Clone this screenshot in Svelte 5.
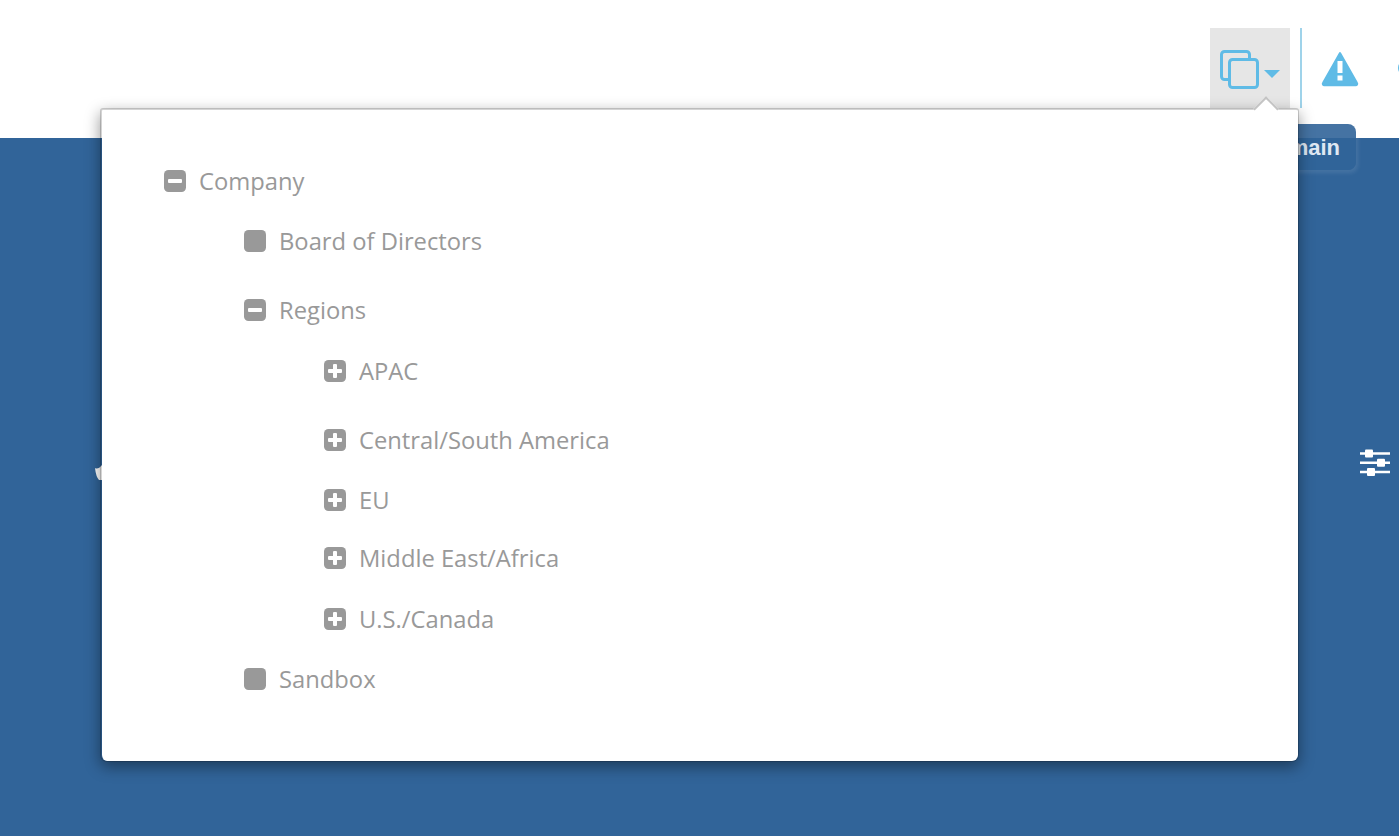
<script>
  const tree = [
    { label: 'Company', icon: 'minus', level: 0 },
    { label: 'Board of Directors', icon: 'none', level: 1 },
    { label: 'Regions', icon: 'minus', level: 1, gap: 'wide' },
    { label: 'APAC', icon: 'plus', level: 2, gap: 'nudge' },
    { label: 'Central/South America', icon: 'plus', level: 2, gap: 'wide' },
    { label: 'EU', icon: 'plus', level: 2 },
    { label: 'Middle East/Africa', icon: 'plus', level: 2, gap: 'tight' },
    { label: 'U.S./Canada', icon: 'plus', level: 2, gap: 'nudge' },
    { label: 'Sandbox', icon: 'none', level: 1 }
  ];
</script>

<div class="page">
  <header class="topbar">
    <button class="switcher" aria-label="Switch view">
      <svg width="62" height="42" viewBox="0 0 62 42" fill="none">
        <path d="M8 29.500H4.500a3 3 0 0 1-3-3V4.500a3 3 0 0 1 3-3h22a3 3 0 0 1 3 3V8" stroke="#5fbbe6" stroke-width="3" />
        <rect x="9.500" y="9.500" width="28" height="28" rx="3" stroke="#5fbbe6" stroke-width="3" />
        <path d="M44 20h16l-8 8z" fill="#5fbbe6" />
      </svg>
    </button>
    <span class="divider"></span>
    <svg class="warn" width="38" height="36" viewBox="0 0 38 36">
      <path d="M19 2 36 32a1.500 1.500 0 0 1-1.300 2.300H3.300A1.500 1.500 0 0 1 2 32z" fill="#5fbbe6" stroke="#5fbbe6" stroke-width="2" stroke-linejoin="round" />
      <rect x="16.500" y="10" width="5" height="12" fill="#fff" />
      <rect x="16.500" y="24.500" width="5" height="5" fill="#fff" />
    </svg>
    <span class="dot"></span>
  </header>

  <main class="content">
    <div class="domain">Domain</div>
    <svg class="bird" width="8" height="16" viewBox="0 0 8 16">
      <path d="M1 3Q4 5 8 0V15H5Q2 12 1 3z" fill="#fff" />
    </svg>
    <svg class="sliders" width="30" height="28" viewBox="0 0 30 28">
      <g stroke="#fff" stroke-width="2.500">
        <path d="M0 4.500h30M0 13.800h30M0 23h30" />
      </g>
      <g fill="#fff">
        <rect x="5" y="0.500" width="8" height="8" rx="1" />
        <rect x="17" y="9.800" width="8" height="8" rx="1" />
        <rect x="7" y="19" width="8" height="8" rx="1" />
      </g>
    </svg>
  </main>

  <div class="popover">
    <span class="arrow"></span>
    <ul class="tree">
      {#each tree as node}
        <li class="node level{node.level} {node.gap ?? ''}">
          <span class="box">
            {#if node.icon !== 'none'}<span class="bar"></span>{/if}
            {#if node.icon === 'plus'}<span class="bar vertical"></span>{/if}
          </span>
          <span class="label">{node.label}</span>
        </li>
      {/each}
    </ul>
  </div>
</div>

<style>
  :global(body) {
    margin: 0;
    background: #316499;
    font-family: "Open Sans", "Noto Sans", sans-serif;
  }
  .page {
    position: relative;
    height: 836px;
    overflow: hidden;
    display: flex;
    flex-direction: column;
  }
  .topbar {
    height: 138px;
    flex: none;
    box-sizing: border-box;
    background: #fff;
    padding: 28px 0 0 1210px;
    display: flex;
    align-items: flex-start;
    overflow: hidden;
  }
  .switcher {
    width: 80px;
    height: 80px;
    flex: none;
    border: 0;
    padding: 22px 0 0 10px;
    background: #e6e6e6;
    display: flex;
    align-items: flex-start;
  }
  .switcher svg {
    flex: none;
  }
  .divider {
    width: 2px;
    height: 80px;
    flex: none;
    margin-left: 10px;
    background: #9fd3ea;
  }
  .warn {
    flex: none;
    margin: 23px 0 0 19px;
  }
  .dot {
    width: 16px;
    height: 16px;
    flex: none;
    margin: 32px 0 0 39px;
    border-radius: 50%;
    background: #5fbbe6;
  }
  .content {
    position: relative;
    flex: 1;
    background: #316499;
  }
  .domain {
    position: absolute;
    right: 43px;
    top: -14px;
    height: 46px;
    padding: 0 16px;
    border-radius: 8px;
    background: rgba(49, 100, 153, 0.9);
    box-shadow: 2px 3px 4px rgba(255, 255, 255, 0.1);
    color: #dfe8f3;
    font: bold 22px/47px "Liberation Sans", sans-serif;
  }
  .bird {
    position: absolute;
    left: 94px;
    top: 327px;
  }
  .sliders {
    position: absolute;
    left: 1360px;
    top: 311px;
  }
  .popover {
    position: absolute;
    left: 100px;
    top: 108px;
    width: 1199px;
    height: 654px;
    box-sizing: border-box;
    background: #fff;
    background-clip: padding-box;
    border: solid rgba(0, 0, 0, 0.17);
    border-width: 2px 1px 1px 2px;
    border-radius: 3px 3px 7px 7px;
    box-shadow: 0 5px 15px rgba(0, 0, 0, 0.4);
  }
  .arrow {
    position: absolute;
    left: 1155px;
    top: -10px;
    width: 18px;
    height: 18px;
    box-sizing: border-box;
    background: #fff;
    border: 2px solid #c4c4c4;
    border-width: 2px 0 0 2px;
    transform: rotate(45deg);
  }
  .tree {
    list-style: none;
    margin: 0;
    padding: 41px 0 0 62px;
  }
  .node {
    position: relative;
    height: 60px;
    display: flex;
    align-items: center;
    gap: 13px;
    color: #999;
    font-size: 23.750px;
  }
  .label {
    position: relative;
    top: 1px;
    margin-top: -2px;
  }
  .level1 { margin-left: 80px; }
  .level2 { margin-left: 160px; }
  .wide { margin-top: 9px; }
  .nudge { margin-top: 1px; }
  .tight { margin-top: -2px; }
  .box {
    position: relative;
    width: 22px;
    height: 22px;
    flex: none;
    border-radius: 4.500px;
    background: #999;
  }
  .bar {
    position: absolute;
    left: 4px;
    top: 9px;
    width: 14px;
    height: 4px;
    background: #fff;
    border-radius: 1px;
  }
  .bar.vertical {
    left: 9px;
    top: 4px;
    width: 4px;
    height: 14px;
  }
</style>
